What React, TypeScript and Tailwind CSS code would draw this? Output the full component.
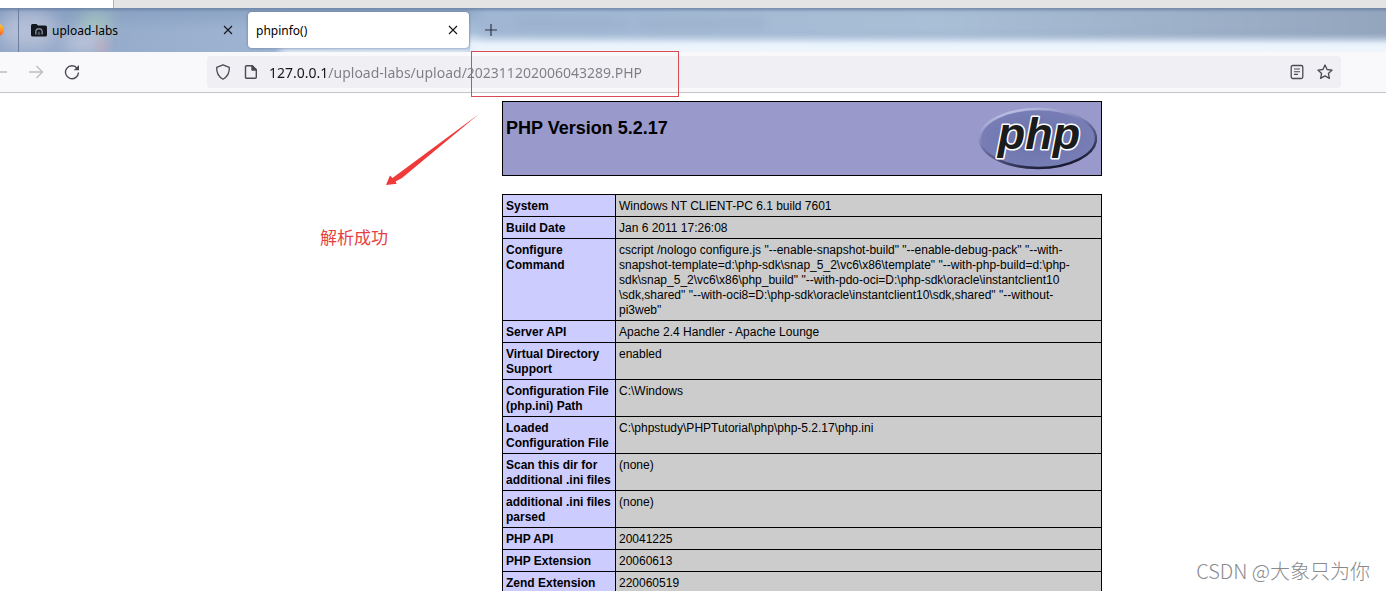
import React, { useState } from 'react';

type InfoRow = { label: string; value: string };

const INFO: InfoRow[] = [
  { label: 'System', value: 'Windows NT CLIENT-PC 6.1 build 7601' },
  { label: 'Build Date', value: 'Jan 6 2011 17:26:08' },
  {
    label: 'Configure Command',
    value:
      'cscript /nologo configure.js "--enable-snapshot-build" "--enable-debug-pack" "--with-\nsnapshot-template=d:\\php-sdk\\snap_5_2\\vc6\\x86\\template" "--with-php-build=d:\\php-\nsdk\\snap_5_2\\vc6\\x86\\php_build" "--with-pdo-oci=D:\\php-sdk\\oracle\\instantclient10\n\\sdk,shared" "--with-oci8=D:\\php-sdk\\oracle\\instantclient10\\sdk,shared" "--without-\npi3web"',
  },
  { label: 'Server API', value: 'Apache 2.4 Handler - Apache Lounge' },
  { label: 'Virtual Directory Support', value: 'enabled' },
  { label: 'Configuration File (php.ini) Path', value: 'C:\\Windows' },
  { label: 'Loaded Configuration File', value: 'C:\\phpstudy\\PHPTutorial\\php\\php-5.2.17\\php.ini' },
  { label: 'Scan this dir for additional .ini files', value: '(none)' },
  { label: 'additional .ini files parsed', value: '(none)' },
  { label: 'PHP API', value: '20041225' },
  { label: 'PHP Extension', value: '20060613' },
  { label: 'Zend Extension', value: '220060519' },
];

const CloseIcon = () => (
  <svg width="10" height="10" viewBox="0 0 10 10" stroke="currentColor" strokeWidth="1.1" fill="none">
    <path d="M1 1l8 8M9 1L1 9" />
  </svg>
);

const FolderIcon = () => (
  <svg width="16" height="16" viewBox="0 0 16 16">
    <path d="M0 3.500A1.500 1.500 0 0 1 1.500 2h4L7 3.500h7.500A1.500 1.500 0 0 1 16 5v8a1.500 1.500 0 0 1-1.500 1.500h-13A1.500 1.500 0 0 1 0 13z" fill="#14171d" />
    <path d="M4.800 12.500V10a3.200 3.200 0 0 1 6.400 0v2.500" fill="none" stroke="#7f8896" strokeWidth="1.400" />
    <path d="M6.700 13v-2.200a1.300 1.300 0 0 1 2.600 0V13z" fill="#4a505c" />
  </svg>
);

const TabStrip = () => (
  <div className="relative flex h-11 shrink-0 items-center overflow-hidden bg-linear-to-b from-[#8fa9c9] via-[#a9bfda] to-[#aac0dc]">
    {/* glass backdrop */}
    <div className="absolute inset-0 overflow-hidden" aria-hidden="true">
      <div className="absolute inset-0 bg-linear-to-r from-[#8095b9]/60 via-transparent via-35% to-[#8496b4]/70" />
      <div className="absolute top-6 right-0 bottom-0 left-[470px] bg-linear-to-b from-transparent via-[#e8f2fc] via-60% to-[#f1f6fc]" />
      <div className="absolute top-0 -right-2 left-[480px] h-7 bg-linear-to-r from-[#a0b6d3] via-[#a9bfd6] via-50% to-[#93a5bd] blur-xs" />
      <div className="absolute top-[38px] left-[280px] h-5 w-48 bg-[#dbe7f5] blur-xs" />
      <div className="absolute top-1 left-0 h-9 w-14 rounded-full bg-[#c3c9dd]/70 blur-sm" />
      <div className="absolute top-1 left-20 h-6 w-8 rounded-full bg-[#a9cdbb]/70 blur-sm" />
      <div className="absolute top-6 left-16 h-5 w-10 rounded-full bg-[#c6cbe0]/80 blur-sm" />
      <div className="absolute top-8 left-24 h-3 w-3 rounded-full bg-[#d2a5b1]/60 blur-xs" />
      <div className="absolute top-2.5 left-[516px] h-2.5 w-28 bg-[#8fa3bd]/30 blur-xs" />
      <div className="absolute top-2.5 left-[638px] h-2.5 w-32 bg-[#8fa3bd]/30 blur-xs" />
      <div className="absolute inset-x-0 top-0 h-1 bg-linear-to-b from-[#5d7395]/60 to-transparent" />
    </div>

    <div className="relative flex h-full w-[19px] shrink-0 items-center border-r border-[#6d7f9e]">
      <div className="-ml-2 h-3 w-3 rounded-full bg-linear-to-b from-[#ffc72e] to-[#ff5a2b]" />
    </div>
    <div className="relative flex h-9 w-[229px] shrink-0 items-center pr-[15px] pl-3">
      <FolderIcon />
      <span className="ml-[5px] grow pt-0.5 font-['Noto_Sans'] text-[12px] leading-4 text-black">upload-labs</span>
      <button aria-label="Close upload-labs" className="text-[#15141a]"><CloseIcon /></button>
    </div>
    <div className="relative flex h-9 w-[221px] shrink-0 items-center rounded bg-white pr-[11px] pl-2 shadow-[0_0_3px_rgba(60,80,120,0.6)]">
      <span className="grow pt-0.5 font-['Noto_Sans'] text-[12px] leading-4 text-black">phpinfo()</span>
      <button aria-label="Close phpinfo()" className="text-[#15141a]"><CloseIcon /></button>
    </div>
    <button aria-label="New tab" className="relative ml-4 text-[#33343f]">
      <svg width="12" height="12" viewBox="0 0 12 12" stroke="currentColor" strokeWidth="1.200">
        <path d="M6 0v12M0 6h12" />
      </svg>
    </button>
  </div>
);

const NavBar = () => {
  const [url, setUrl] = useState('127.0.0.1/upload-labs/upload/202311202006043289.PHP');

  return (
    <div className="flex h-[41px] shrink-0 items-center border-b border-[#c4c4c9] bg-[#f9f9fb] pr-[45px]">
      <button aria-label="Back" className="-ml-2 text-[#bcbcc1]">
        <svg width="16" height="16" viewBox="0 0 16 16" fill="none" stroke="currentColor" strokeWidth="1.300">
          <path d="M15 8H1.500M7.500 2L1.500 8l6 6" />
        </svg>
      </button>
      <button aria-label="Forward" className="ml-5 text-[#bcbcc1]">
        <svg width="16" height="16" viewBox="0 0 16 16" fill="none" stroke="currentColor" strokeWidth="1.300">
          <path d="M1 8h13.500M8.500 2l6 6-6 6" />
        </svg>
      </button>
      <button aria-label="Reload" className="ml-5 text-[#4a4a52]">
        <svg width="16" height="16" viewBox="0 0 16 16" fill="none" stroke="currentColor" strokeWidth="1.400">
          <path d="M13.200 4.300A6.500 6.500 0 1 0 14.500 8.500" />
          <path d="M15 1v5.300H9.700z" fill="currentColor" stroke="none" />
        </svg>
      </button>
      <div className="ml-[127px] flex h-8 grow items-center rounded bg-[#f0f0f4] pr-2 pl-2 text-[#4a4a52]">
        <svg width="16" height="16" viewBox="0 0 16 16" fill="none" stroke="currentColor" strokeWidth="1.300" strokeLinejoin="round">
          <path d="M8 .8l6.300 2.500c.3 4.800-1 9-6.300 11.900C2.700 12.300 1.400 8.100 1.700 3.300z" />
        </svg>
        <svg className="ml-3" width="16" height="16" viewBox="0 0 16 16" fill="none" stroke="currentColor" strokeWidth="1.400" strokeLinejoin="round">
          <path d="M3.500 1.700h5.800l4 4v7.600a1 1 0 0 1-1 1H3.500a1 1 0 0 1-1-1V2.700a1 1 0 0 1 1-1z" />
          <path d="M9 1.700V6h4.300z" fill="currentColor" />
        </svg>
        {/* host part is dark, the path is dimmed */}
        <input
          aria-label="Address"
          value={url}
          onChange={(e) => setUrl(e.target.value)}
          spellCheck={false}
          className="ml-2.5 h-8 min-w-0 grow bg-linear-to-r from-[#15141a] from-[58px] to-[#7d7d84] to-[58px] bg-clip-text font-['Noto_Sans'] text-[14px] leading-5 text-transparent outline-none"
        />
        <button aria-label="Reader view" className="mr-3">
          <svg width="16" height="16" viewBox="0 0 16 16" fill="none" stroke="currentColor" strokeWidth="1.300">
            <rect x="2.200" y="1.500" width="11.600" height="13" rx="1.500" />
            <path d="M5 5h6M5 7.700h6M5 10.400h4" strokeWidth="1.100" />
          </svg>
        </button>
        <button aria-label="Bookmark">
          <svg width="16" height="16" viewBox="0 0 16 16" fill="none" stroke="currentColor" strokeWidth="1.300" strokeLinejoin="round">
            <path d="M8 .9l2.100 4.600 5 .6-3.700 3.400 1 4.900L8 11.900l-4.400 2.500 1-4.900L.9 6.100l5-.6z" />
          </svg>
        </button>
      </div>
    </div>
  );
};

const PhpLogo = () => (
  <svg width="120" height="67" viewBox="0 0 120 67" role="img" aria-label="PHP Logo">
    <defs>
      <radialGradient id="face" cx="0.500" cy="0.500" r="0.600">
        <stop offset="0" stopColor="#6a71a9" />
        <stop offset="1" stopColor="#7b80b8" />
      </radialGradient>
      <linearGradient id="rim" x1="0.200" y1="0" x2="0.700" y2="1">
        <stop offset="0" stopColor="#c3c7ea" />
        <stop offset="0.450" stopColor="#7378ad" />
        <stop offset="1" stopColor="#14152b" />
      </linearGradient>
    </defs>
    <ellipse cx="61" cy="32.500" rx="58" ry="29.500" fill="url(#face)" stroke="url(#rim)" strokeWidth="2.500" />
    <text
      x="62"
      y="43"
      textAnchor="middle"
      className="font-['Liberation_Sans'] text-[45px] font-bold italic"
      fill="#1b1b1b"
      stroke="#ffffff"
      strokeWidth="3"
      strokeLinejoin="round"
      paintOrder="stroke"
    >
      php
    </text>
  </svg>
);

const PhpInfo = () => (
  <main className="flex flex-col items-center gap-[18px] pt-2 pl-[218px] font-['Liberation_Sans',sans-serif] text-black">
    <header className="flex h-[75px] w-[600px] shrink-0 items-start justify-between border border-black bg-[#9999cc] pt-1 pr-1 pl-[3px]">
      <h1 className="pt-3 text-[18px] leading-5 font-bold">PHP Version 5.2.17</h1>
      <PhpLogo />
    </header>
    <table className="w-[600px] table-fixed border-collapse text-left align-top text-[12px] leading-[15px]">
      <tbody>
        {INFO.map((row) => (
          <tr key={row.label}>
            <th className="w-[113px] border border-black bg-[#ccccff] px-[3px] pt-1 pb-0.5 align-top font-bold">{row.label}</th>
            <td className="border border-black bg-[#cccccc] px-[3px] pt-1 pb-0.5 align-top whitespace-pre-line">{row.value}</td>
          </tr>
        ))}
      </tbody>
    </table>
  </main>
);

const Annotations = () => (
  <div className="pointer-events-none absolute inset-0">
    <div className="absolute top-[51px] left-[471px] h-[46px] w-52 border border-[#d84a55]" />
    <svg className="absolute top-28 left-96" width="100" height="76" viewBox="0 0 100 76" fill="#f03a3a">
      <path d="M95 2L8.500 66 6 63.500 2 73l10.800-1.200-1.300-2.300L18 66z" />
    </svg>
    <p className="absolute top-[225px] left-80 font-['Noto_Sans_CJK_SC',sans-serif] text-[17px] leading-6 text-[#e8403f]">解析成功</p>
    <p className="absolute right-4 bottom-2 font-['Noto_Sans_CJK_SC',sans-serif] text-[20px] leading-6 font-light text-[#8a8a8e]">
      CSDN @大象只为你
    </p>
  </div>
);

export default function App() {
  return (
    <div className="relative flex h-screen flex-col overflow-hidden bg-white">
      {/* Edge of the window behind */}
      <div className="flex h-2 shrink-0 bg-[#e4e4e4]">
        <div className="w-[114px] border-r border-[#b4b4b4] bg-white" />
      </div>
      <TabStrip />
      <NavBar />
      <PhpInfo />
      <Annotations />
    </div>
  );
}
